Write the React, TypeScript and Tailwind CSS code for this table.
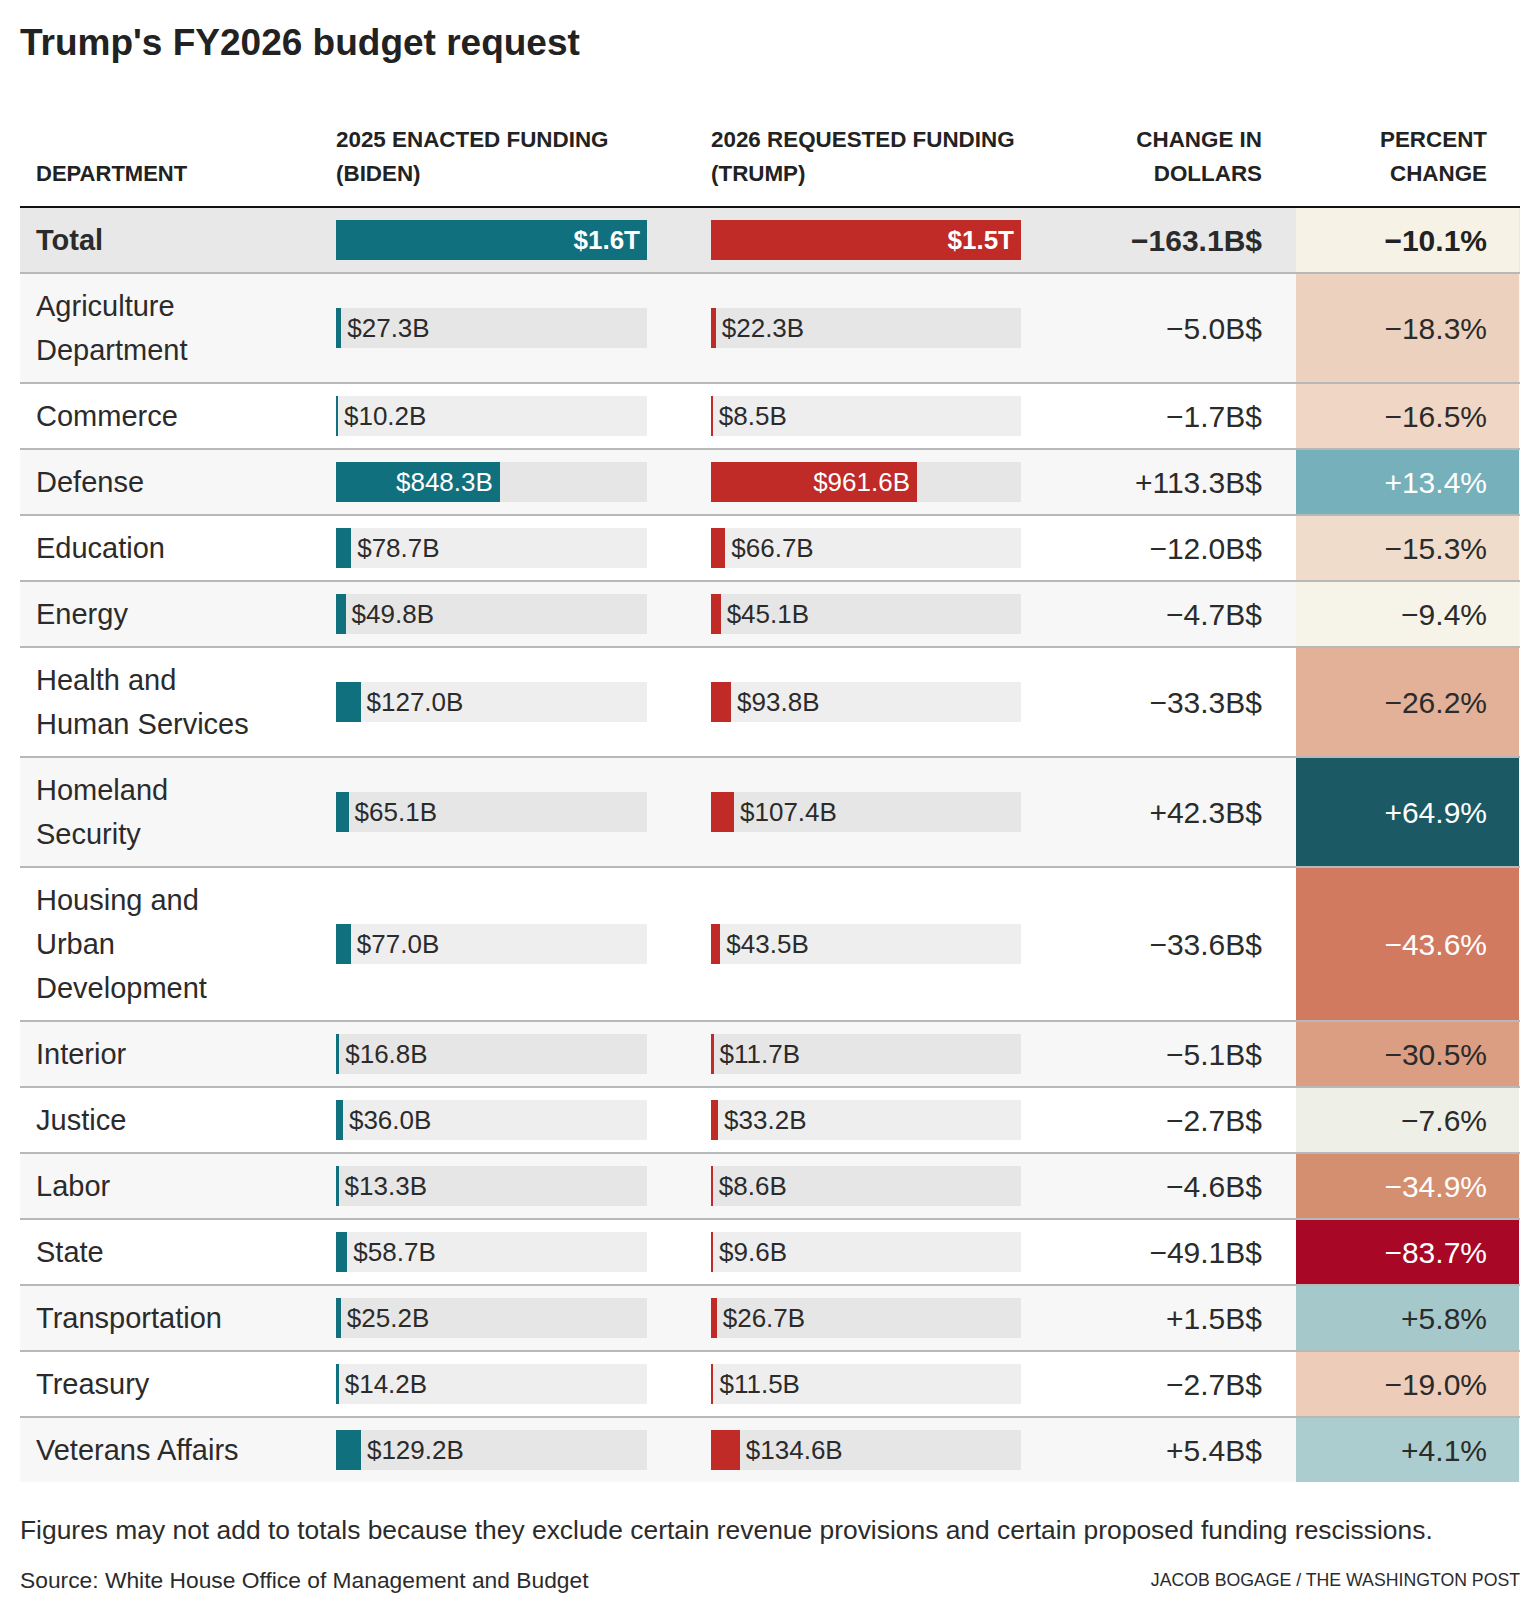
import React from 'react';

type Row = {
  lines: string[];
  biden: number;
  bidenLabel: string;
  trump: number;
  trumpLabel: string;
  change: string;
  pct: string;
  pctBg: string;
  pctText: string;
};

const BIDEN_TOTAL = 1610;
const TRUMP_TOTAL = 1447;

const total: Row = {
  lines: ['Total'],
  biden: 1610,
  bidenLabel: '$1.6T',
  trump: 1447,
  trumpLabel: '$1.5T',
  change: '\u2212163.1B$',
  pct: '\u221210.1%',
  pctBg: 'bg-[#f6f2e6]',
  pctText: 'text-[#222]',
};

const rows: Row[] = [
  { lines: ['Agriculture', 'Department'], biden: 27.3, bidenLabel: '$27.3B', trump: 22.3, trumpLabel: '$22.3B', change: '\u22125.0B$', pct: '\u221218.3%', pctBg: 'bg-[#edd1bf]', pctText: 'text-[#2b2b2b]' },
  { lines: ['Commerce'], biden: 10.2, bidenLabel: '$10.2B', trump: 8.5, trumpLabel: '$8.5B', change: '\u22121.7B$', pct: '\u221216.5%', pctBg: 'bg-[#efd6c5]', pctText: 'text-[#2b2b2b]' },
  { lines: ['Defense'], biden: 848.3, bidenLabel: '$848.3B', trump: 961.6, trumpLabel: '$961.6B', change: '+113.3B$', pct: '+13.4%', pctBg: 'bg-[#76b0bb]', pctText: 'text-white' },
  { lines: ['Education'], biden: 78.7, bidenLabel: '$78.7B', trump: 66.7, trumpLabel: '$66.7B', change: '\u221212.0B$', pct: '\u221215.3%', pctBg: 'bg-[#f0dccb]', pctText: 'text-[#2b2b2b]' },
  { lines: ['Energy'], biden: 49.8, bidenLabel: '$49.8B', trump: 45.1, trumpLabel: '$45.1B', change: '\u22124.7B$', pct: '\u22129.4%', pctBg: 'bg-[#f6f3e8]', pctText: 'text-[#2b2b2b]' },
  { lines: ['Health and', 'Human Services'], biden: 127.0, bidenLabel: '$127.0B', trump: 93.8, trumpLabel: '$93.8B', change: '\u221233.3B$', pct: '\u221226.2%', pctBg: 'bg-[#e2b198]', pctText: 'text-[#2b2b2b]' },
  { lines: ['Homeland', 'Security'], biden: 65.1, bidenLabel: '$65.1B', trump: 107.4, trumpLabel: '$107.4B', change: '+42.3B$', pct: '+64.9%', pctBg: 'bg-[#1b5964]', pctText: 'text-white' },
  { lines: ['Housing and', 'Urban', 'Development'], biden: 77.0, bidenLabel: '$77.0B', trump: 43.5, trumpLabel: '$43.5B', change: '\u221233.6B$', pct: '\u221243.6%', pctBg: 'bg-[#d17a5f]', pctText: 'text-white' },
  { lines: ['Interior'], biden: 16.8, bidenLabel: '$16.8B', trump: 11.7, trumpLabel: '$11.7B', change: '\u22125.1B$', pct: '\u221230.5%', pctBg: 'bg-[#dc9e83]', pctText: 'text-[#2b2b2b]' },
  { lines: ['Justice'], biden: 36.0, bidenLabel: '$36.0B', trump: 33.2, trumpLabel: '$33.2B', change: '\u22122.7B$', pct: '\u22127.6%', pctBg: 'bg-[#eeefe6]', pctText: 'text-[#2b2b2b]' },
  { lines: ['Labor'], biden: 13.3, bidenLabel: '$13.3B', trump: 8.6, trumpLabel: '$8.6B', change: '\u22124.6B$', pct: '\u221234.9%', pctBg: 'bg-[#d48e70]', pctText: 'text-white' },
  { lines: ['State'], biden: 58.7, bidenLabel: '$58.7B', trump: 9.6, trumpLabel: '$9.6B', change: '\u221249.1B$', pct: '\u221283.7%', pctBg: 'bg-[#a80725]', pctText: 'text-white' },
  { lines: ['Transportation'], biden: 25.2, bidenLabel: '$25.2B', trump: 26.7, trumpLabel: '$26.7B', change: '+1.5B$', pct: '+5.8%', pctBg: 'bg-[#a5c8cb]', pctText: 'text-[#2b2b2b]' },
  { lines: ['Treasury'], biden: 14.2, bidenLabel: '$14.2B', trump: 11.5, trumpLabel: '$11.5B', change: '\u22122.7B$', pct: '\u221219.0%', pctBg: 'bg-[#edcdb9]', pctText: 'text-[#2b2b2b]' },
  { lines: ['Veterans Affairs'], biden: 129.2, bidenLabel: '$129.2B', trump: 134.6, trumpLabel: '$134.6B', change: '+5.4B$', pct: '+4.1%', pctBg: 'bg-[#abcdcf]', pctText: 'text-[#2b2b2b]' },
];

const Bar = ({
  value,
  max,
  span,
  label,
  fill,
  bold,
}: {
  value: number;
  max: number;
  span: number;
  label: string;
  fill: string;
  bold?: boolean;
}) => {
  const w = (value / max) * span;
  const inside = w > 130;
  return (
    <div className="flex h-10 w-full bg-black/[0.065] text-[26px] leading-10">
      {inside ? (
        <div
          className={`${fill} h-full shrink-0 flex items-center justify-end pr-[7px] text-white ${bold ? 'font-bold' : ''}`}
          style={{ width: w }}
        >
          {label}
        </div>
      ) : (
        <>
          <div className={`${fill} h-full shrink-0`} style={{ width: w }} />
          <span className="pl-[6px] text-[#2b2b2b] whitespace-nowrap">{label}</span>
        </>
      )}
    </div>
  );
};

const TableRow = ({ row, bg, bold, last }: { row: Row; bg: string; bold?: boolean; last?: boolean }) => (
  <div className={`flex items-stretch ${bg} ${last ? '' : 'border-b-2 border-[#b8b8b8]'}`}>
    <div className={`w-[316px] pl-4 py-[10px] text-[29px] leading-[44px] ${bold ? 'font-bold' : ''}`}>
      {row.lines.map((l) => (
        <div key={l}>{l}</div>
      ))}
    </div>
    <div className="w-[311px] flex items-center">
      <Bar value={row.biden} max={BIDEN_TOTAL} span={311} label={row.bidenLabel} fill="bg-[#11707e]" bold={bold} />
    </div>
    <div className="w-[64px]" />
    <div className="w-[310px] flex items-center">
      <Bar value={row.trump} max={TRUMP_TOTAL} span={310} label={row.trumpLabel} fill="bg-[#c02b27]" bold={bold} />
    </div>
    <div className={`w-[275px] pr-[34px] flex items-center justify-end text-[30px] ${bold ? 'font-bold' : ''}`}>
      {row.change}
    </div>
    <div
      className={`w-[223px] pr-8 flex items-center justify-end text-[30px] ${row.pctBg} ${row.pctText} ${bold ? 'font-bold' : ''}`}
    >
      {row.pct}
    </div>
  </div>
);

const App = () => {
  return (
    <div className="w-[1540px] bg-white px-5 pt-[21px] pb-6 text-[#2b2b2b] font-['Liberation_Sans',Arial,sans-serif]">
      <h1 className="text-[37px] leading-[44px] font-bold text-[#222]">Trump's FY2026 budget request</h1>

      <div className="mt-[58px] flex items-end pb-[15px] text-[22.4px] leading-[34px] font-bold uppercase text-[#222]">
        <div className="w-[316px] pl-4 text-[22px]">Department</div>
        <div className="w-[375px]">
          <div>2025 Enacted Funding</div>
          <div>(Biden)</div>
        </div>
        <div className="w-[310px]">
          <div>2026 Requested Funding</div>
          <div>(Trump)</div>
        </div>
        <div className="w-[275px] pr-[34px] text-right">
          <div>Change in</div>
          <div>Dollars</div>
        </div>
        <div className="w-[223px] pr-8 text-right">
          <div>Percent</div>
          <div>Change</div>
        </div>
      </div>

      <div className="border-t-2 border-[#111]">
        <TableRow row={total} bg="bg-[#e8e8e8]" bold />
        {rows.map((r, i) => (
          <TableRow
            key={r.lines.join(' ')}
            row={r}
            bg={i % 2 === 0 ? 'bg-[#f7f7f7]' : 'bg-white'}
            last={i === rows.length - 1}
          />
        ))}
      </div>

      <p className="mt-[30px] text-[26.4px] leading-9">
        Figures may not add to totals because they exclude certain revenue provisions and certain proposed funding
        rescissions.
      </p>
      <div className="mt-[17px] flex items-center justify-between">
        <span className="text-[22.8px] leading-[30px]">Source: White House Office of Management and Budget</span>
        <span className="text-[17.7px] leading-[30px] uppercase">Jacob Bogage / The Washington Post</span>
      </div>
    </div>
  );
};

export default App;
